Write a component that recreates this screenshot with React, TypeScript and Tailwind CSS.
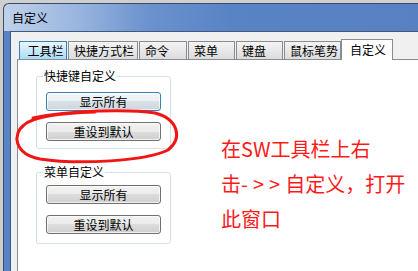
const font = "font-['Noto_Sans_CJK_SC','Microsoft_YaHei',sans-serif]";

const tabs = [
  { label: '工具栏', w: 'w-[48px]', hover: true },
  { label: '快捷方式栏', w: 'w-[70px]' },
  { label: '命令', w: 'w-[48px]' },
  { label: '菜单', w: 'w-[47px]' },
  { label: '键盘', w: 'w-[47px]' },
  { label: '鼠标笔势', w: 'w-[57px]' },
];

function Tab({ label, w, hover }: { label: string; w: string; hover?: boolean }) {
  return (
    <div
      className={`${w} h-[18px] mr-[1px] border-l border-t border-r flex items-center pl-[5px] text-[12px] leading-none ${
        hover
          ? 'border-[#3c7fb1] bg-gradient-to-b from-[#eaf6fd] to-[#a9dbf6] justify-center pl-0'
          : 'border-[#898c95] bg-gradient-to-b from-[#f4f4f4] to-[#dcdcdc]'
      }`}
    >
      {label}
    </div>
  );
}

function Btn({ label, focused, className }: { label: string; focused?: boolean; className: string }) {
  return (
    <div
      className={`${className} w-[115px] h-[19px] rounded-[3px] border flex items-center justify-center text-[12px] leading-none shadow-[inset_0_0_0_1px_rgba(255,255,255,0.7)] ${
        focused
          ? 'border-[#3c7fb1] bg-[linear-gradient(#f3f7fa_0%,#e9eef1_50%,#d9e2e8_50%,#cdd6dc_100%)]'
          : 'border-[#707070] bg-[linear-gradient(#f2f2f2_0%,#ebebeb_50%,#dddddd_50%,#cfcfcf_100%)]'
      }`}
    >
      {label}
    </div>
  );
}

export default function App() {
  return (
    <div className={`${font} relative w-[418px] h-[271px] overflow-hidden bg-[#cfcfcf] pt-[3px] pl-[3px] text-black`}>
      {/* Window */}
      <div className="h-full flex flex-col border-l border-t border-[#3a4c68] rounded-tl-[6px] bg-[linear-gradient(90deg,#bfd1ea_0%,#98b5df_18%,#6a92cd_35%,#5883c5_55%,#5781c3_100%)]">
        {/* Title bar */}
        <div className="h-[27px] flex items-center pl-[8px] text-[12px] pt-[1px]">自定义</div>

        {/* Body */}
        <div className="flex-1 flex pl-[6px] bg-[#5884c6]">
          <div className="flex-1 flex flex-col border-l border-t border-[#41597c] bg-[#f0f0f0] pt-[7px] pl-[6px]">
            {/* Tabs */}
            <div className="h-[20px] flex items-end pl-[2px]">
              {tabs.map((t) => (
                <Tab key={t.label} {...t} />
              ))}
              <div className="relative z-10 -mb-px -ml-[1px] w-[52px] h-[21px] bg-white border-l border-t border-r border-[#898c95] flex items-center pl-[8px] text-[12px] leading-none">
                自定义
              </div>
            </div>

            {/* Panel */}
            <div className="flex-1 flex bg-white border-l border-t border-[#898c95] pl-[18px]">
              <div className="flex flex-col w-[135px]">
                <fieldset className="mt-[9px] border border-[#d5dfe5] rounded-[3px] px-[9px] pb-[7px]">
                  <legend className="-ml-[3px] px-[1px] text-[12px] leading-[14px]">快捷键自定义</legend>
                  <Btn label="显示所有" focused className="mt-[9px]" />
                  <Btn label="重设到默认" className="mt-[11px]" />
                </fieldset>
                <fieldset className="mt-[16px] border border-[#d5dfe5] rounded-[3px] px-[9px] pb-[9px]">
                  <legend className="-ml-[3px] px-[1px] text-[12px] leading-[14px]">菜单自定义</legend>
                  <Btn label="显示所有" className="mt-[6px]" />
                  <Btn label="重设到默认" className="mt-[11px]" />
                </fieldset>
              </div>

              {/* Annotation text */}
              <div className="ml-[50px] mt-[71px] text-[20px] leading-[35px] text-[#ff1a1a] whitespace-nowrap">
                <div>在SW工具栏上右</div>
                <div>
                  击<span className="tracking-[5px]">-&gt;&gt;</span>自定义，打开
                </div>
                <div>此窗口</div>
              </div>
            </div>
          </div>
        </div>
      </div>

      {/* Hand-drawn red circle */}
      <svg className="absolute left-0 top-0 pointer-events-none" width="418" height="271" viewBox="0 0 418 271">
        <path
          d="M 33 118 C 70 110, 130 109, 155 113 C 178 119, 183 138, 168 150 C 145 161, 80 165, 40 159 C 14 154, 12 134, 24 125 C 34 116, 60 113, 95 112"
          fill="none"
          stroke="#f01616"
          strokeWidth="3"
          strokeLinecap="round"
        />
      </svg>
    </div>
  );
}
